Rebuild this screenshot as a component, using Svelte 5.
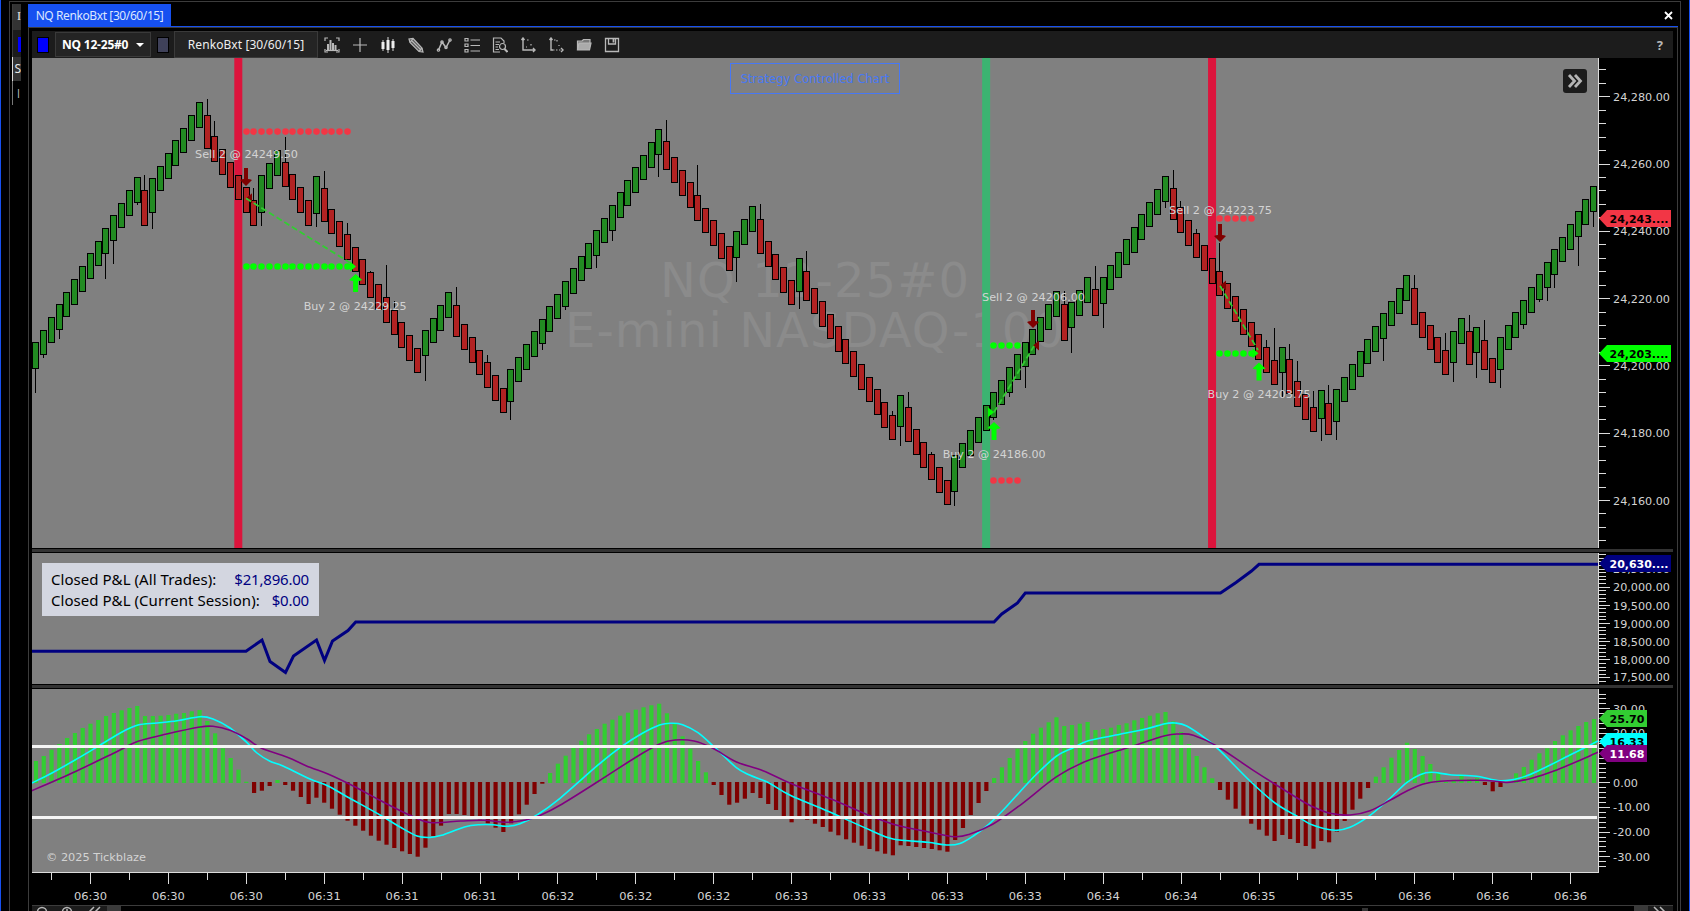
<script lang="ts">
  type Point = [number, number];

  const FIRST_X = 35.97;
  const BAR_STEP = 7.79;
  const BODY = 25.7;

  // [direction, bars, first edge, last edge, body of the first bar]
  // the edge is the top of rising bars and the bottom of falling ones
  const runs: [string, number, number, number, number][] = [
    ['u', 14, 342.3, 177.3, 27], ['d', 1, 225.7, 225.7, 35.3], ['u', 7, 178.3, 102.3, 34.3],
    ['d', 7, 149.3, 225.7, 34], ['u', 3, 175.3, 150.3, 37.3], ['d', 4, 187.3, 225.7, 25.3],
    ['u', 1, 176.3, 176.3, 37.3], ['d', 13, 221.7, 373.3, 33.3], ['u', 4, 330.3, 292.3, 26],
    ['d', 7, 337.3, 413.3, 32], ['u', 20, 369.3, 129.3, 32.3], ['d', 9, 170.3, 271.3, 29],
    ['u', 3, 231.3, 206.3, 27], ['d', 5, 254.3, 305.3, 35], ['u', 1, 258.3, 258.3, 34],
    ['d', 12, 301.3, 440.3, 30], ['u', 1, 395.3, 395.3, 32], ['d', 6, 442.3, 505.3, 35],
    ['u', 14, 455.3, 291.3, 37], ['d', 1, 341.3, 341.3, 37], ['u', 3, 302.3, 277.3, 26],
    ['d', 1, 316.3, 316.3, 27], ['u', 9, 277.3, 176.3, 27], ['d', 14, 220.3, 385.3, 32],
    ['u', 1, 347.3, 347.3, 25.4], ['d', 4, 394.3, 432.3, 35], ['u', 1, 390.3, 390.3, 29],
    ['d', 1, 435.3, 435.3, 32], ['u', 10, 389.3, 275.3, 33], ['d', 5, 325.3, 375.3, 37],
    ['u', 2, 331.3, 318.3, 32], ['d', 1, 365.3, 365.3, 34], ['u', 1, 327.3, 327.3, 26],
    ['d', 2, 370.3, 383.3, 30], ['u', 13, 337.3, 186.3, 33]
  ];

  const wicks: Record<number, number> = {
    0: 393, 1: 358, 3: 339, 9: 279, 10: 264, 13: 205, 14: 175, 15: 229, 22: 99, 23: 121, 28: 188,
    29: 226, 32: 137, 36: 227, 37: 171, 40: 223, 43: 271, 45: 265, 46: 301, 50: 381, 54: 287,
    58: 355, 61: 420, 65: 350, 68: 310, 72: 268, 74: 241, 80: 177, 81: 120, 85: 165, 90: 282,
    93: 204, 98: 309, 99: 251, 110: 411, 111: 446, 112: 392, 115: 452, 118: 506, 123: 420,
    125: 397, 127: 388, 132: 291, 133: 353, 136: 266, 137: 328, 145: 208, 146: 170, 147: 201,
    149: 229, 152: 243, 158: 340, 159: 328, 160: 397, 161: 344, 162: 361, 164: 391, 165: 441,
    166: 385, 167: 440, 173: 361, 177: 275, 181: 333, 182: 382, 184: 315, 185: 378, 186: 320,
    188: 388, 191: 329, 193: 302, 194: 301, 195: 288, 198: 266, 200: 227
  };

  const histogram = [
    22, 27, 33.3, 39, 45, 50, 55, 59.3, 63, 67, 70, 72.7, 75, 77, 67, 67, 67.3, 68, 69.3, 70, 71.7,
    73, 62, 49.7, 34.7, 25, 13.3, 1.3, -11, -8.7, -4, 3, -3, -8.7, -15, -22, -15.7, -20.7, -26.7,
    -32.7, -38.7, -43.7, -48.7, -53.7, -58.7, -62.7, -66, -69.3, -72, -74.7, -65.7, -54, -43.7,
    -32, -32, -33, -34, -37.3, -41.3, -45.7, -50, -41.3, -32.3, -22.7, -12, -1.7, 10, 19.3, 27.3,
    35.7, 42.3, 48.7, 54, 59.3, 63.3, 67.3, 70.3, 73.3, 75.7, 77.7, 79.3, 69.7, 59, 46.7, 34.3, 22,
    10.7, -3, -13, -22.7, -20.7, -16.7, -11, -16, -22, -28, -34, -40.3, -36, -37.7, -41.7, -45,
    -49.7, -53.3, -57.3, -60.7, -63.7, -67, -69.3, -71.7, -73.3, -63.3, -64, -65, -66, -67, -68.3,
    -69.7, -58, -46, -33, -21, -9, 5, 15.7, 25, 34.3, 42, 49.3, 55.3, 60.7, 65.7, 57, 58, 59.3, 61,
    53, 54, 55.3, 58, 59.7, 62.7, 65, 67.3, 69.7, 71, 61.7, 51, 39, 27, 15.7, 4.7, -8, -17.7,
    -26.7, -33.7, -41.7, -47.7, -53.7, -59, -53, -57, -61, -64, -66.7, -59, -60.3, -49.7, -39,
    -27.7, -16.7, -6, 6.3, 15.7, 25.3, 33, 40.3, 34, 27, 19, 11, 1, 3.5, 8.3, 4, 5, -3, -9.3, -5, 1,
    9.7, 16, 23.3, 29.7, 34.7, 42, 47.7, 52.7, 57, 61, 64
  ];

  const fastLine: Point[] = [
    [32, 783], [52, 773], [75, 760], [97, 747], [122, 732], [138, 725], [157, 723], [177, 720.7],
    [200, 716.7], [213, 719], [230, 728], [247, 742.7], [257, 753], [270, 761.3], [283, 766],
    [310, 779], [328, 786], [347, 796.7], [380, 815], [400, 827], [417, 836], [430, 837.5],
    [441.5, 835.3], [464.5, 827], [479.8, 824.7], [493, 824.7], [506.5, 826.3], [520, 823.7],
    [537, 815], [560, 798.3], [598.4, 764.7], [621.4, 746.7], [642.4, 733.3], [659.6, 725],
    [671, 723.3], [682.6, 724.7], [698, 732.7], [715, 747.7], [736, 767.3], [749.6, 775],
    [768.7, 782.7], [789.7, 795], [828, 811.3], [870, 830], [893, 839], [927.5, 842.3],
    [946.6, 845], [960, 843.5], [973.4, 836], [988.7, 824.3], [1004, 809.3], [1020, 791.7],
    [1036.7, 774], [1056.7, 756], [1073.3, 747.7], [1088.3, 740.7], [1120, 734.3], [1146.7, 728.7],
    [1165, 723.7], [1175, 723], [1186.7, 726], [1206.7, 739.3], [1220, 750.7], [1250, 781],
    [1275, 803], [1296.7, 816], [1313.3, 825.3], [1335, 830.3], [1350, 827.3], [1368.3, 816.7],
    [1386.7, 801.3], [1406.7, 782.7], [1420, 774.7], [1431.7, 772.3], [1450, 774.7],
    [1476.7, 776.3], [1500, 780.7], [1520, 778], [1540, 770], [1570, 755], [1598, 741]
  ];

  const slowLine: Point[] = [
    [32, 790.7], [75, 771.7], [116.7, 751.7], [138, 741.3], [166.7, 734], [200, 727], [213, 726.3],
    [230, 730.3], [246.7, 738.7], [261.7, 748.3], [286.7, 757], [310, 767.3], [328, 774],
    [353.3, 786], [380, 800.3], [410, 815.3], [430, 822.5], [460.6, 821], [483.6, 820.3],
    [506.5, 822.3], [525.7, 820], [541, 815], [560, 805.3], [598.4, 781.3], [636.7, 756.7],
    [659.6, 744], [675, 740], [694, 741], [713, 748.3], [736, 761.7], [763, 770.7],
    [791.7, 783.7], [831.8, 799.3], [870, 815.7], [897, 825.3], [927.5, 831.7], [954.3, 836.7],
    [969.6, 834.3], [992.6, 824.3], [1020, 805.3], [1056.7, 776.7], [1086.7, 761], [1126.7, 748],
    [1165, 735.7], [1180, 734], [1193.3, 735.3], [1216.7, 746], [1253.3, 770.3], [1296.7, 797.7],
    [1313.3, 807], [1330, 813.3], [1350, 815], [1370, 810.7], [1390, 800.3], [1408.3, 790.3],
    [1423.3, 784], [1440, 781.3], [1480, 780.3], [1500, 781.7], [1510, 782.3], [1530, 778.7],
    [1556.7, 770], [1598, 752.3]
  ];

  const equity: Point[] = [
    [32, 651.3], [246, 651.3], [262, 640], [270, 661.5], [285.5, 672.5], [293.5, 656],
    [316.5, 640], [324.5, 660.5], [332.5, 641], [348, 630.5], [355.7, 622], [994, 622],
    [1001.8, 614], [1017.5, 603], [1025.3, 593], [1220.5, 593], [1236, 582.5], [1251.5, 571],
    [1259, 564.3], [1598, 564.3]
  ];

  const barX = (i: number) => FIRST_X + BAR_STEP * i;

  function buildCandles() {
    const out: any[] = [];
    let index = 0;
    for (const [dir, count, from, to, first] of runs) {
      for (let k = 0; k < count; k++) {
        const edge = count > 1 ? from + ((to - from) * k) / (count - 1) : from;
        const body = k === 0 ? first : BODY;
        const top = Math.round(dir === 'u' ? edge : edge - body);
        const bottom = Math.round(dir === 'u' ? edge + body : edge);
        out.push({ dir, top, bottom, x: Math.round(barX(index) - 3.7), wick: wicks[index] });
        index++;
      }
    }
    return out;
  }

  function smooth(pts: Point[]) {
    let d = `M${pts[0][0]} ${pts[0][1]}`;
    for (let i = 0; i < pts.length - 1; i++) {
      const p0 = pts[i - 1] ?? pts[i];
      const p1 = pts[i];
      const p2 = pts[i + 1];
      const p3 = pts[i + 2] ?? p2;
      const c1 = [p1[0] + (p2[0] - p0[0]) / 6, p1[1] + (p2[1] - p0[1]) / 6];
      const c2 = [p2[0] - (p3[0] - p1[0]) / 6, p2[1] - (p3[1] - p1[1]) / 6];
      d += `C${c1[0]} ${c1[1]} ${c2[0]} ${c2[1]} ${p2[0]} ${p2[1]}`;
    }
    return d;
  }

  // minor and major marks of a vertical axis
  function ticks(zero: number, step: number, majorEvery: number, from: number, to: number) {
    const out: { y: number; major: boolean }[] = [];
    const start = Math.ceil((from - zero) / step);
    for (let n = start; zero + n * step < to; n++) {
      out.push({ y: Math.round(zero + n * step), major: n % majorEvery === 0 });
    }
    return out;
  }

  const candles = buildCandles();
  const priceTicks = ticks(96.2, 13.46, 5, 66, 546);
  const equityTicks = ticks(586.7, 3.63, 5, 554, 684);
  const macdTicks = ticks(782.3, 4.93, 5, 692, 869);

  const priceLabels = ['24,280.00', '24,260.00', '24,240.00', '24,220.00', '24,200.00', '24,180.00', '24,160.00']
    .map((text, i) => ({ text, y: 96.5 + 67.3 * i }));
  const equityLabels = [
    { text: '20,500.00', y: 569 }, { text: '20,000.00', y: 587 }, { text: '19,500.00', y: 606 },
    { text: '19,000.00', y: 624 }, { text: '18,500.00', y: 642 }, { text: '18,000.00', y: 660 },
    { text: '17,500.00', y: 677 }
  ];
  const macdLabels = [
    { text: '30.00', y: 708.5 }, { text: '20.00', y: 733 }, { text: '0.00', y: 782.7 },
    { text: '-10.00', y: 807 }, { text: '-20.00', y: 832 }, { text: '-30.00', y: 856.7 }
  ];

  const times = [
    '06:30', '06:30', '06:30', '06:31', '06:31', '06:31', '06:32', '06:32', '06:32', '06:33',
    '06:33', '06:33', '06:33', '06:34', '06:34', '06:35', '06:35', '06:36', '06:36', '06:36'
  ];

  const sessions = [
    { bar: 26, color: '#dc143c' },
    { bar: 122, color: '#3cb371' },
    { bar: 151, color: '#dc143c' }
  ];

  const dotRows = [
    { from: 27, to: 40, y: 131.6, color: '#f23645' },
    { from: 27, to: 40, y: 266.5, color: '#00ff00' },
    { from: 123, to: 126, y: 345.5, color: '#00ff00' },
    { from: 123, to: 126, y: 480.5, color: '#f23645' },
    { from: 152, to: 156, y: 218.5, color: '#f23645' },
    { from: 152, to: 156, y: 353.5, color: '#00ff00' }
  ];

  const dots = dotRows.flatMap((row) =>
    Array.from({ length: row.to - row.from + 1 }, (_, k) => ({
      x: Math.round(barX(row.from + k) - 3.7) + 3.5,
      y: row.y,
      color: row.color
    }))
  );

  const trades = [
    { x1: 246, y1: 198.3, x2: 352, y2: 264 },
    { x1: 994, y1: 412.3, x2: 1034, y2: 346 },
    { x1: 1220, y1: 285.7, x2: 1258, y2: 350 }
  ];

  // execution arrows, y is the tip
  const arrows = [
    { x: 246, y: 186, side: 'sell' },
    { x: 355.6, y: 274, side: 'buy' },
    { x: 994, y: 422, side: 'buy' },
    { x: 1033, y: 328, side: 'sell' },
    { x: 1220, y: 242, side: 'sell' },
    { x: 1259, y: 362.5, side: 'buy' }
  ];

  const markers = [
    { x: 246, y: 198.3, side: 'sell' },
    { x: 356, y: 266.5, side: 'buy' },
    { x: 994, y: 412.3, side: 'buy' },
    { x: 1033, y: 345.5, side: 'sell' },
    { x: 1220, y: 285.5, side: 'sell' },
    { x: 1258.5, y: 353.3, side: 'buy' }
  ];

  const notes = [
    { x: 195, y: 158, text: 'Sell 2 @ 24249.50' },
    { x: 303.7, y: 310, text: 'Buy 2 @ 24229.25' },
    { x: 982, y: 301, text: 'Sell 2 @ 24206.00' },
    { x: 942.7, y: 458, text: 'Buy 2 @ 24186.00' },
    { x: 1169, y: 214, text: 'Sell 2 @ 24223.75' },
    { x: 1207.6, y: 398, text: 'Buy 2 @ 24203.75' }
  ];
</script>

{#snippet axis(marks, labels, top, bottom)}
  <rect x="1598" y={top} width="1" height={bottom - top} class="axis-line" />
  {#each marks as mark}
    <rect x="1598" y={mark.y} width={mark.major ? 12 : 8} height="1" class="axis-line" />
  {/each}
  {#each labels as label}
    <text x="1613" y={label.y + 4.2} class="axis-label" lengthAdjust="spacingAndGlyphs"
      textLength={label.text.length === 9 ? 57 : label.text.length === 6 ? 37 : label.text.length === 5 ? 32 : 25}>{label.text}</text>
  {/each}
{/snippet}

{#snippet tag(y, right, fill, color, text)}
  <path d="M1599 {y + 8.5}L1607 {y}H{right}V{y + 17}H1607Z" {fill} />
  <text x="1609.5" y={y + 13} fill={color} class="tag-text" textLength={right - 1612} lengthAdjust="spacingAndGlyphs">{text}</text>
{/snippet}

<div class="desktop">
  <div class="behind">
    <div class="behind-tab">I</div>
    <div class="behind-bar"><i></i></div>
    <div class="behind-field">S</div>
    <div class="behind-row">|</div>
  </div>

  <div class="window">
    <header class="titlebar">
      <div class="tab"><span>NQ RenkoBxt [30/60/15]</span></div>
      <svg class="close" width="9" height="9" viewBox="0 0 9 9"><path d="M1 1L8 8M8 1L1 8" /></svg>
    </header>

    <div class="content">
      <nav class="toolbar">
        <span class="swatch link"></span>
        <button class="instrument"><span>NQ 12-25#0</span><i class="caret"></i></button>
        <span class="swatch muted"></span>
        <button class="interval"><span>RenkoBxt [30/60/15]</span></button>
        <div class="icons">
          <svg viewBox="0 0 16 16"><path d="M1 4V1H4M12 1H15V4M15 12V15H12M4 15H1V12" /><path d="M4 13V7M6.5 13V3M9 13V6M11.5 13V8" stroke-width="2" /><path d="M2 13.5H14" /></svg>
          <svg viewBox="0 0 16 16"><path d="M8 1V15M1 8H15" /></svg>
          <svg viewBox="0 0 16 16"><path d="M3 3V14M8 0V16M13 2V14" /><path d="M3 5V12M8 3V13M13 4V11" stroke-width="3" stroke="#eee" /></svg>
          <svg viewBox="0 0 16 16"><path d="M1 2L2 5.500L11 14.500L15 15L14 11L5 1.500Z" fill="#555" /><path d="M3.500 3.500L12.500 12.500M2 5.500L5 1.500M11 14.500L14 11" /></svg>
          <svg viewBox="0 0 16 16"><path d="M2.5 13L6 5L10 10.5L14 3" stroke-width="1.5" /><circle cx="2.5" cy="13" r="1.2" /><circle cx="6" cy="5" r="1.2" /><circle cx="10" cy="10.5" r="1.2" /><circle cx="14" cy="3" r="1.2" /></svg>
          <svg viewBox="0 0 16 16"><path d="M1 1.500H4V4H1ZM1 7H4V9.500H1ZM1 12.500H4V15H1ZM6.500 3H16M6.500 8.500H16M6.500 14H16" /></svg>
          <svg viewBox="0 0 16 16"><path d="M8 15H1.500V1H9L12 4V6M3.500 5H8M3.500 7.500H7M3.500 10H6M3.500 12.500H7" /><circle cx="10.500" cy="9.500" r="3" /><path d="M12.500 12L15.500 15" stroke-width="2" /></svg>
          <svg viewBox="0 0 16 16"><path d="M3 1V13H14M1.500 3L3 1L4.500 3M13 11L15 13L13 15" stroke-width="1.400" /><path d="M7 3H8V4M11 7V9M6 10H7" stroke-dasharray="1.500 1.500" /></svg>
          <svg viewBox="0 0 16 16"><path d="M3 1V13H5M1.500 3L3 1L4.500 3M13 11L15 13L13 15" stroke-width="1.400" /><path d="M5 13H14M6 3H9V5M11 8V9" stroke-dasharray="1.500 1.500" /></svg>
          <svg viewBox="0 0 16 16"><path d="M1.500 13V4H6L7.500 2.500H14V6" fill="#777" /><path d="M1.500 13L3 6H15L13.500 13Z" fill="#aaa" /></svg>
          <svg viewBox="0 0 16 16"><path d="M1.500 1.500H14.500V14.500H1.500ZM4.500 1.500V7H11.500V1.500" stroke-width="1.300" /><path d="M9.500 2V5.500" stroke-width="1.800" /></svg>
        </div>
        <span class="help">?</span>
      </nav>

      <div class="panel">
        <svg width="1641" height="490" viewBox="32 58 1641 490">
          <rect x="32" y="58" width="1566" height="490" class="plot" />
          <text x="660" y="297" class="watermark" textLength="309">NQ 12-25#0</text>
          <text x="565" y="347" class="watermark" textLength="499">E-mini NASDAQ-100</text>

          {#each sessions as s}
            <rect x={barX(s.bar) - 4.2} y="58" width="8" height="490" fill={s.color} />
          {/each}

          <g shape-rendering="crispEdges">
            {#each candles as c}
              {#if c.wick !== undefined}
                <rect x={c.x + 3} y={Math.min(c.wick, c.top)} width="1"
                  height={c.wick < c.top ? c.top - c.wick : c.wick - c.top} />
              {/if}
              <rect x={c.x} y={c.top} width="7" height={c.bottom - c.top} />
              <rect x={c.x + 1} y={c.top + 1} width="5" height={c.bottom - c.top - 2}
                fill={c.dir === 'u' ? '#228b22' : '#b22222'} />
            {/each}
          </g>

          {#each dots as dot}
            <circle cx={dot.x} cy={dot.y} r="3.300" fill={dot.color} />
          {/each}
          {#each markers as m}
            {#if m.side === 'sell'}
              <path d="M{m.x} {m.y}l6 -5v10z" fill="#800000" />
            {:else}
              <path d="M{m.x} {m.y}l-6 -5v10z" fill="#00ff00" />
            {/if}
          {/each}
          {#each trades as t}
            <line x1={t.x1} y1={t.y1} x2={t.x2} y2={t.y2} class="trade" />
          {/each}
          {#each arrows as a}
            {#if a.side === 'sell'}
              <path d="M{a.x} {a.y}l-6 -6q2 -1 4 -1v-11h4v11q2 0 4 1z" fill="#800000" />
            {:else}
              <path d="M{a.x} {a.y}l-6.500 6q2 1 4 1v11h5v-11q2 0 4 -1z" fill="#00ff00" />
            {/if}
          {/each}
          {#each notes as note}
            <text x={note.x} y={note.y} class="note" textLength="103" lengthAdjust="spacingAndGlyphs">{note.text}</text>
          {/each}

          {@render axis(priceTicks, priceLabels, 58, 548)}
          {@render tag(210, 1671, '#f23645', '#000', '24,243....')}
          {@render tag(345, 1671, '#00ff00', '#000', '24,203....')}
        </svg>
        <div class="strategy"><span>Strategy Controlled Chart</span></div>
        <button class="jump" aria-label="Latest">
          <svg width="16" height="16" viewBox="0 0 16 16"><path d="M2 2L7.500 8L2 14M8 2L13.500 8L8 14" /></svg>
        </button>
      </div>

      <div class="splitter"></div>

      <div class="panel">
        <svg width="1641" height="131" viewBox="32 553 1641 131">
          <rect x="32" y="553" width="1566" height="131" class="plot" />
          <polyline points={equity.map((p) => p.join(',')).join(' ')} class="equity" />
          {@render axis(equityTicks, equityLabels, 553, 684)}
          {@render tag(555, 1671, '#000080', '#fff', '20,630....')}
        </svg>
        <div class="summary">
          <div><span>Closed P&amp;L (All Trades):</span><b>$21,896.00</b></div>
          <div><span>Closed P&amp;L (Current Session):</span><b>$0.00</b></div>
        </div>
      </div>

      <div class="splitter"></div>

      <div class="panel">
        <svg width="1641" height="183" viewBox="32 689 1641 183">
          <rect x="32" y="689" width="1566" height="183" class="plot" />
          {#each histogram as h, i}
            <rect x={barX(i) - 2.1} y={h > 0 ? 783 - h : 782} width="4.200" height={Math.abs(h)}
              fill={h > 0 ? '#32cd32' : '#800000'} />
          {/each}
          <path d={smooth(fastLine)} class="curve" stroke="#00ffff" />
          <path d={smooth(slowLine)} class="curve" stroke="#800080" />
          {@render axis(macdTicks, macdLabels, 689, 872)}
          {@render tag(710, 1647, '#32cd32', '#000', '25.70')}
          {@render tag(733, 1647, '#00ffff', '#000', '16.33')}
          {@render tag(745, 1647, '#800080', '#fff', '11.68')}
          <rect x="32" y="745" width="1565" height="3" class="level" />
          <rect x="32" y="816" width="1565" height="3" class="level" />
          <text x="46" y="861" class="note" textLength="100" lengthAdjust="spacingAndGlyphs">© 2025 Tickblaze</text>
        </svg>
      </div>

      <svg class="time-axis" width="1641" height="33" viewBox="32 872 1641 33">
        <rect x="32" y="872" width="1567" height="1" class="axis-line" />
        {#each times as time, i}
          <rect x={Math.round(51 + 77.9 * i)} y="873" width="1" height="7" class="axis-line" />
          <rect x={Math.round(90 + 77.9 * i)} y="873" width="1" height="11" class="axis-line" />
          <text x={90.5 + 77.9 * i} y="900.300" text-anchor="middle" class="axis-label" textLength="33" lengthAdjust="spacingAndGlyphs">{time}</text>
        {/each}
      </svg>

      <footer class="scrollbar">
        <svg class="scroll-tools" width="75" height="5" viewBox="32 906 75 5">
          <circle cx="42" cy="912" r="4.500" /><circle cx="67" cy="912" r="4.500" /><path d="M67 909V912M94 907L89 912M100 907L95 912" />
        </svg>
        <span class="scroll-end"></span>
        <span class="scroll-track"><i></i></span>
        <span class="scroll-end"></span>
        <svg class="scroll-tools" width="25" height="5" viewBox="1648 906 25 5"><path d="M1654 907L1659 912M1660 907L1665 912" /></svg>
      </footer>
    </div>
  </div>
</div>

<style>
  :global(body) {
    background: #000;
    overflow: hidden;
  }

  .desktop {
    box-sizing: border-box;
    display: flex;
    width: 1690px;
    height: 911px;
    padding: 1px 8px 0 8px;
    border-left: 1px solid #1650f0;
    border-right: 1px solid #1650f0;
    background: #000;
    font-family: 'Noto Sans', 'Open Sans', sans-serif;
    overflow: hidden;
  }

  .behind {
    box-sizing: border-box;
    width: 19px;
    padding: 2px 7px 0 2px;
    border-left: 1px solid #3c3c3c;
    border-top: 1px solid #3c3c3c;
    color: #e8e8e8;
    font-size: 12px;
    flex: none;
  }

  .behind > div {
    box-sizing: border-box;
    height: 24px;
    overflow: hidden;
    border-left: 1px solid #3c3c3c;
    text-align: right;
    line-height: 24px;
  }

  .behind > .behind-tab {
    height: 26px;
    background: #333;
    font-family: 'Liberation Serif', serif;
  }

  .behind > .behind-bar {
    height: 27px;
    padding: 7px 0 0 5px;
    background: #1c1c1c;
  }

  .behind-bar i {
    display: block;
    height: 15px;
    background: #0000ff;
  }

  .behind > .behind-field {
    border-left-color: #ddd;
    background: #333;
  }

  .behind > .behind-row {
    border-left-color: #777;
    font-size: 9px;
  }

  .window {
    box-sizing: border-box;
    flex: none;
    width: 1653px;
    height: 910px;
    border-top: 1px solid #3c3c3c;
    border-right: 1px solid #3c3c3c;
    padding-right: 2px;
  }

  .titlebar {
    box-sizing: border-box;
    display: flex;
    justify-content: space-between;
    height: 25px;
    padding-top: 2px;
    border-bottom: 1px solid #1650f0;
  }

  .tab {
    width: 143px;
    height: 23px;
    background: #1650f0;
    color: #dbe6ff;
    font-size: 12px;
    line-height: 23px;
    text-align: center;
    white-space: nowrap;
  }

  .tab span {
    display: inline-block;
    letter-spacing: -0.4px;
  }

  .close {
    margin: 7px 5px 0 0;
    fill: none;
    stroke: #fff;
    stroke-width: 1.8;
  }

  .content {
    box-sizing: border-box;
    height: 884px;
    padding: 3px 4px 0 3px;
    border: 1px solid #3c3c3c;
    border-bottom: none;
  }

  .toolbar {
    box-sizing: border-box;
    display: flex;
    align-items: center;
    height: 27px;
    padding-left: 5px;
    background: #1c1c1c;
  }

  .swatch {
    box-sizing: border-box;
    width: 12px;
    height: 16px;
    border: 1px solid #000;
  }

  .link {
    background: #0000ff;
  }

  .muted {
    margin-left: 6px;
    background: #3f4159;
  }

  button {
    box-sizing: border-box;
    padding: 0;
    border: 1px solid #3a3a3a;
    background: #242424;
    color: #eee;
    font-family: inherit;
  }

  .instrument {
    display: flex;
    align-items: center;
    justify-content: space-between;
    width: 96px;
    height: 25px;
    margin-left: 6px;
    padding: 0 6px;
    color: #fff;
    font-size: 12px;
    font-weight: 700;
    white-space: nowrap;
  }

  .instrument span {
    letter-spacing: -0.2px;
  }

  .caret {
    border: 4px solid transparent;
    border-top-color: #fff;
    border-bottom: none;
  }

  .interval {
    width: 144px;
    height: 27px;
    margin-left: 5px;
    font-size: 12px;
    letter-spacing: 0.08px;
  }

  .icons {
    display: flex;
    gap: 12px;
    margin-left: 6px;
  }

  .icons svg {
    width: 16px;
    height: 16px;
    fill: none;
    stroke: #b8b8b8;
    stroke-width: 1.2;
  }

  .help {
    margin: 0 10px 0 auto;
    color: #b8b8b8;
    font-size: 13px;
    font-weight: 700;
  }

  .panel {
    position: relative;
  }

  .panel > svg,
  .time-axis {
    display: block;
  }

  svg text {
    font-family: 'DejaVu Sans', Verdana, sans-serif;
    font-size: 11px;
  }

  .plot {
    fill: #808080;
  }

  svg text.watermark {
    fill: #8b8b8b;
    font-size: 48px;
  }

  .note {
    fill: #d3d3d3;
  }

  .trade {
    stroke: #32cd32;
    stroke-width: 1.8;
    stroke-dasharray: 6 3;
  }

  .equity {
    fill: none;
    stroke: #000080;
    stroke-width: 3;
  }

  .curve {
    fill: none;
    stroke-width: 1.6;
  }

  .level {
    fill: #f5f5f5;
  }

  .axis-line {
    fill: #dcdcdc;
  }

  .axis-label {
    fill: #d3d3d3;
  }

  svg text.tag-text {
    font-size: 11px;
    font-weight: 700;
  }

  .strategy {
    position: absolute;
    left: 698px;
    top: 5px;
    box-sizing: border-box;
    width: 170px;
    height: 31px;
    border: 1px solid #4778f5;
    color: #4778f5;
    font-family: 'DejaVu Sans', Verdana, sans-serif;
    font-size: 11.5px;
    letter-spacing: 0.05px;
    line-height: 31px;
    text-align: center;
    white-space: nowrap;
  }

  .jump {
    position: absolute;
    left: 1531px;
    top: 11px;
    display: flex;
    align-items: center;
    justify-content: center;
    width: 24px;
    height: 24px;
    border: none;
    border-radius: 3px;
    background: #1c1c1c;
  }

  .jump svg {
    fill: none;
    stroke: #b4b4b4;
    stroke-width: 2.8;
  }

  .splitter {
    box-sizing: border-box;
    height: 5px;
    border-top: 1px solid #000;
    border-bottom: 1px solid #000;
    background: #333;
  }

  .summary {
    position: absolute;
    left: 10px;
    top: 10px;
    box-sizing: border-box;
    width: 277px;
    height: 53px;
    padding: 6px 10px 0 9px;
    background: #d3d6e0;
    color: #000;
    font-size: 15px;
    letter-spacing: 0.06px;
    line-height: 21px;
    white-space: nowrap;
  }

  .summary div {
    display: flex;
    justify-content: space-between;
  }

  .summary b {
    color: #000080;
    font-weight: 400;
    letter-spacing: -0.2px;
  }

  .scrollbar {
    display: flex;
    height: 5px;
    border-top: 1px solid #3c3c3c;
    background: #1c1c1c;
  }

  .scroll-tools {
    fill: none;
    stroke: #b8b8b8;
    stroke-width: 1.5;
  }

  .scroll-end {
    width: 14px;
    background: #3a3a3a;
  }

  .scroll-track {
    display: flex;
    flex: 1;
    background: #000;
  }

  .scroll-track i {
    width: 6px;
    height: 3px;
    margin: 2px 0 0 1241px;
    background: #333;
  }
</style>
